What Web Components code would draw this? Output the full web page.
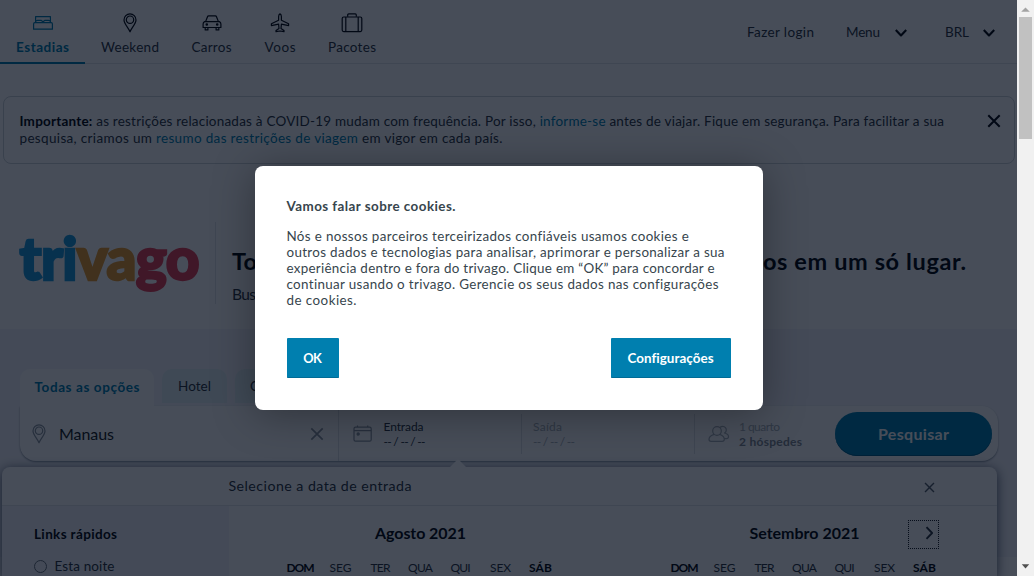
<!DOCTYPE html>
<html lang="pt-BR"><head><meta charset="utf-8"><title>trivago</title>
<style>html,body{margin:0;height:576px;overflow:hidden;background:#fff;font-family:Lato,"Open Sans",sans-serif;font-size:13.5px;color:#2c353e}</style></head>
<body><trv-app></trv-app>
<script>
// Text line whose letter spacing is adjusted to fill the width given in "w".
class FitText extends HTMLElement{
  constructor(){super();this.attachShadow({mode:'open'}).innerHTML='<style>:host{display:block;white-space:nowrap;width:max-content;line-height:var(--lh,17px)}span{display:inline-block}</style><span><slot></slot></span>';}
  connectedCallback(){
    const w=parseFloat(this.getAttribute('w')),s=this.shadowRoot.querySelector('span');
    if(!w)return;
    s.style.letterSpacing='0px';
    const n=this.textContent.length,d=(w-s.getBoundingClientRect().width)/(n-1);
    s.style.letterSpacing=d.toFixed(3)+'px';
    s.style.marginRight=(-d).toFixed(3)+'px';
  }
}
const icons={
 bed:[20,16,'<path d="M2.6 7.5V1.6h14.8v5.9M2.6 6.2l2-.9h3.4l2 1.4 2-1.4h3.4l2 .9M1.8 7.6h16.4q1.2 0 1.2 1.3v5.3H.6V8.9q0-1.3 1.2-1.3z"/>'],
 pin:[14,20,'<path d="M7 18.8C6 15.7 1 10.6 1 6.9a6 6 0 0 1 12 0c0 3.7-5 8.8-6 11.9z"/><circle cx="7" cy="6.7" r="3.7"/>'],
 car:[20,16,'<path d="M3.6 6.6 5.5 1.7Q5.8.9 6.6.9h6.8q.8 0 1.1.8l1.9 4.9M2.6 6.6h14.8q1.5.8 1.5 2.5v3.4H1.1V9.1q0-1.7 1.5-2.5zM3.2 12.7v2.2h2.7v-2.2m8.2 0v2.2h2.7v-2.2"/><circle cx="4.8" cy="9.5" r=".7"/><circle cx="15.2" cy="9.5" r=".7"/>'],
 plane:[20,20,'<path d="M10 .8q1.4.8 1.4 3v3.5l7.2 3.5v1.8l-7.2-1.5-.4 4.5 3 2v1.1L10 18l-4 .7v-1.1l3-2-.4-4.5-7.2 1.5v-1.8l7.2-3.5V3.8q0-2.2 1.4-3z"/>'],
 bag:[22,20,'<rect x="1.2" y="4" width="19.6" height="14.6" rx="1.5"/><path d="M4.8 4v14.6M17.2 4v14.6M6.7 3.8V1.9q0-1 1-1h6.6q1 0 1 1v1.9"/>'],
 down:[14,10,'<path d="m1.8 2 5.2 5.5L12.2 2" stroke-width="2.1"/>'],
 right:[9,14,'<path d="m1.5 1.2 5.6 5.8-5.6 5.8" stroke-width="1.9"/>'],
 close:[14,14,'<path d="m1.3 1.3 11.4 11.4m0-11.4L1.3 12.7" stroke-width="var(--sw,2)"/>'],
 cal:[20,18,'<rect x="1" y="2.2" width="17.2" height="14" rx="1.5"/><path d="M1 5.7h17.2M4.5 2V.6m10.2 1.4V.6"/><circle cx="5.2" cy="9" r="1.1" fill="currentColor"/>'],
 people:[22,18,'<circle cx="9" cy="6" r="4.3"/><path d="M6.3 9.4Q1 10.8 1 14.3q0 2 2 2h11.3q2 0 2-2 0-3.5-4.7-4.9M12 2.5a3.6 3.6 0 1 1 4.5 5.5q4 .9 4 3.8 0 1.8-2 1.8h-2"/>'],
 up:[9,5,'<path d="M.2 4.7 4.5.5l4.3 4.2z" fill="currentColor" stroke="none"/>'],
 dn:[9,5,'<path d="M.8.3h7.4L4.5 4.5z" fill="currentColor" stroke="none"/>']
};
class TrvIcon extends HTMLElement{
  constructor(){super();this.attachShadow({mode:'open'});}
  connectedCallback(){const [w,h,p]=icons[this.getAttribute('name')];
   this.shadowRoot.innerHTML=`<style>:host{display:block;flex:none;line-height:0}</style><svg width="${this.getAttribute('width')||w}" height="${this.getAttribute('height')||h}" viewBox="0 0 ${w} ${h}" fill="none" stroke="currentColor" stroke-width="1.2" stroke-linejoin="round">${p}</svg>`;}
}
function define(name,html){
  const t=document.createElement('template');
  t.innerHTML='<style>*{box-sizing:border-box}</style>'+html;
  customElements.define(name,class extends HTMLElement{constructor(){super();this.attachShadow({mode:'open'}).append(document.importNode(t.content,true));}});
}
customElements.define('fit-text',FitText);
customElements.define('trv-icon',TrvIcon);

define('nav-item',`<style>:host{display:flex;flex-direction:column;align-items:center;height:64px;padding-top:12px;box-sizing:border-box}
.i{height:22px;display:flex;align-items:center;margin-bottom:5px;color:#05080e}:host([active]),:host([active]) .i{color:#007faf}:host([active]){font-weight:700;border-bottom:2px solid #007faf}</style><div class="i"><slot name="icon"></slot></div><slot></slot>`);
define('trv-header',`<style>:host{display:flex;height:64px;border-bottom:1px solid #e3e6e9;box-sizing:border-box}
nav-item{flex:none}.r{margin-left:auto;display:flex;padding:24px 21px 0 0;align-items:flex-start}.r trv-icon{margin:4px 0 0 14px;color:#05080e}.m{display:flex}</style>
<nav-item active style="width:85px"><trv-icon slot="icon" name="bed"></trv-icon><fit-text w="53">Estadias</fit-text></nav-item>
<nav-item style="width:90px"><trv-icon slot="icon" name="pin"></trv-icon><fit-text w="58">Weekend</fit-text></nav-item>
<nav-item style="width:73px"><trv-icon slot="icon" name="car"></trv-icon><fit-text w="40">Carros</fit-text></nav-item>
<nav-item style="width:64px"><trv-icon slot="icon" name="plane"></trv-icon><fit-text w="31">Voos</fit-text></nav-item>
<nav-item style="width:80px"><trv-icon slot="icon" name="bag"></trv-icon><fit-text w="48">Pacotes</fit-text></nav-item>
<div class="r"><fit-text w="67">Fazer login</fit-text><div class="m" style="margin-left:32px"><fit-text w="34">Menu</fit-text><trv-icon name="down"></trv-icon></div><div class="m" style="margin-left:37px"><fit-text w="24">BRL</fit-text><trv-icon name="down" style="margin-left:13px"></trv-icon></div></div>`);
define('trv-notice',`<style>:host{display:flex;margin:32px 2px 0 3px;height:68px;border:1px solid #ccd2d7;border-radius:8px;padding:16px 13px 0 15.5px;box-sizing:border-box;justify-content:space-between}a{color:#007faf}b,trv-icon{color:#05080e}trv-icon{margin-top:1px}</style>
<div><fit-text w="924.5"><b>Importante:</b> as restrições relacionadas à COVID-19 mudam com frequência. Por isso, <a>informe-se</a> antes de viajar. Fique em segurança. Para facilitar a sua</fit-text><fit-text w="483">pesquisa, criamos um <a>resumo das restrições de viagem</a> em vigor em cada país.</fit-text></div><trv-icon name="close"></trv-icon>`);
define('trv-hero',`<style>:host{display:flex;height:165px;padding:58px 50px 0 19px;box-sizing:border-box}
.logo{font-size:58.5px;font-weight:900;--lh:60px;width:196px;margin-top:5px;-webkit-text-stroke:2.4px currentColor}.logo fit-text{margin-left:.5px}.b{color:#1c9bdc;-webkit-text-stroke-color:#1c9bdc}.o{color:#e89c2c;-webkit-text-stroke-color:#e89c2c}.g{color:#e63f55;-webkit-text-stroke-color:#e63f55}
.t{flex:1;border-left:1px solid #e3e6e9;height:82px;padding:24px 1px 0 16px}.h{display:flex;justify-content:space-between;font-size:23.5px;font-weight:700;--lh:30px;color:#05080e}.s{font-size:15.5px;--lh:20px;margin-top:8px}</style>
<div class="logo"><fit-text w="180"><span class="b">tri</span><span class="o">va</span><span class="g">go</span></fit-text></div>
<div class="t"><div class="h"><fit-text w="25">To</fit-text><fit-text w="203">os em um só lugar.</fit-text></div><div class="s"><fit-text w="24">Bus</fit-text></div></div>`);
define('trv-search',`<style>:host{display:block;margin:0 19px 0 20px}
.tabs{display:flex;height:37px;gap:8px}.tab{height:34px;border-radius:10px 10px 0 0;background:#e2eff3;padding:9px 16px 0}.tab.on{height:37px;width:134px;padding:10px 0 0 14.5px;background:#fff;color:#007faf;font-weight:700}
.bar{display:flex;height:55px;background:#fff;border-radius:0 16px 16px 16px;box-shadow:0 1px 2px #8c95a0;align-items:center}
.c{display:flex;align-items:center;border-right:1px solid #dfe3e7;flex:none}
.dest{width:319px;height:55px;padding:0 14px 0 12px;color:#8c959e}.dest fit-text{font-size:16px;margin:0 auto 0 13px;color:#171b21;--lh:20px}
.two{--lh:15px;font-size:12px}.btn{width:157px;height:44px;border-radius:22px;background:#007faf;color:#fff;display:flex;justify-content:center;align-items:center;font-weight:700;font-size:16px;--lh:20px;box-shadow:inset 0 -1px 0 #005f8a}</style>
<div class="tabs"><div class="tab on"><fit-text w="105">Todas as opções</fit-text></div><div class="tab"><fit-text w="33">Hotel</fit-text></div><div class="tab" style="width:64px;padding-left:15px"><fit-text>C</fit-text></div></div>
<div class="bar"><div class="c dest"><trv-icon name="pin"></trv-icon><fit-text w="55">Manaus</fit-text><trv-icon name="close" style="--sw:1.7"></trv-icon></div>
<div class="c" style="width:183px;height:40px;padding-left:14px;gap:10.5px"><trv-icon name="cal" style="color:#8c959e"></trv-icon><div class="two"><fit-text w="40">Entrada</fit-text><fit-text w="42">-- / -- / --</fit-text></div></div>
<div class="c" style="width:173px;height:40px;padding-left:11px;color:#a8afb6"><div class="two"><fit-text w="29">Saída</fit-text><fit-text w="42">-- / -- / --</fit-text></div></div>
<div class="c" style="border:0;width:140px;padding-left:13px;gap:9px;color:#a8afb6"><trv-icon name="people"></trv-icon><div class="two"><fit-text w="41">1 quarto</fit-text><fit-text w="63" style="font-weight:700;color:#828a92">2 hóspedes</fit-text></div></div>
<div class="btn"><fit-text w="71">Pesquisar</fit-text></div></div>`);
define('cal-month',`<style>:host{display:block;width:280px;flex:none}.m{display:flex;justify-content:center;font-size:16px;font-weight:700;--lh:20px;color:#05080e}.d{display:grid;grid-template-columns:repeat(7,40px);justify-items:center;font-size:12px;margin-top:16px}b{color:#05080e}</style><div class="m"><slot></slot></div>
<div class="d"><fit-text w="28"><b>DOM</b></fit-text><fit-text w="22">SEG</fit-text><fit-text w="20">TER</fit-text><fit-text w="25">QUA</fit-text><fit-text w="20">QUI</fit-text><fit-text w="21">SEX</fit-text><fit-text w="23"><b>SÁB</b></fit-text></div>`);
define('date-panel',`<style>:host{display:block;position:relative;margin:6px 20px 0 2px;height:110px;background:#fff;border-radius:8px 8px 0 0;box-shadow:0 2px 12px rgba(25,35,60,.75)}
.arrow{position:absolute;left:448px;top:-8px;width:0;border:8px solid transparent;border-top:0;border-bottom-color:#fff}
.head{height:39px;border-bottom:1px solid #e3e6e9;display:flex;justify-content:space-between;padding:9px 62px 0 226.5px;font-size:14.2px;--lh:20px}.head trv-icon{margin-top:6px;color:#555e68}
.body{display:flex;height:71px}.side{width:227px;background:#f4f5fa;padding:20px 0 0 32px}.o{display:flex;gap:7.5px;margin-top:15px}.o i{width:13px;height:13px;border:1px solid #68717b;border-radius:50%;margin-top:2px}
.cals{display:flex;gap:104px;padding:17px 0 0 51.5px;position:relative}.next{position:absolute;left:679px;top:14px;width:31px;height:29px;border:1px dotted #171b21;display:flex;align-items:center;padding:0 0 3px 16px}</style>
<div class="arrow"></div><div class="head"><fit-text w="183">Selecione a data de entrada</fit-text><trv-icon name="close" width="11" height="11" style="--sw:1.8"></trv-icon></div>
<div class="body"><div class="side"><fit-text w="83" style="font-weight:700;color:#05080e">Links rápidos</fit-text><div class="o"><i></i><fit-text w="60">Esta noite</fit-text></div></div>
<div class="cals"><cal-month><fit-text w="91">Agosto 2021</fit-text></cal-month><cal-month><fit-text w="110">Setembro 2021</fit-text></cal-month><div class="next"><trv-icon name="right"></trv-icon></div></div></div>`);
define('cookie-dialog',`<style>:host{position:absolute;inset:0;background:rgba(0,8,24,.72);display:flex;justify-content:center;align-items:flex-start;padding-top:165.5px;box-sizing:border-box}
.d{width:508px;height:244.5px;border-radius:8px;background:#fff;color:#37454d;padding:32px;box-shadow:0 4px 42px rgba(0,0,0,.34);--lh:16px;font-size:13.4px}
.t{font-weight:700;margin-bottom:14px}.f{display:flex;justify-content:space-between;margin-top:30px;color:#fff;font-weight:700}.b{height:40.5px;background:#007faf;border-radius:1px;display:flex;align-items:center;justify-content:center;border-bottom:1px solid #006b96;padding-top:2px}</style>
<div class="d"><fit-text class="t" w="169">Vamos falar sobre cookies.</fit-text>
<fit-text w="402">Nós e nossos parceiros terceirizados confiáveis usamos cookies e</fit-text><fit-text w="438">outros dados e tecnologias para analisar, aprimorar e personalizar a sua</fit-text><fit-text w="428">experiência dentro e fora do trivago. Clique em “OK” para concordar e</fit-text><fit-text w="432">continuar usando o trivago. Gerencie os seus dados nas configurações</fit-text><fit-text w="70">de cookies.</fit-text>
<div class="f"><div class="b" style="width:52px"><fit-text w="18.5" style="font-size:12.8px">OK</fit-text></div><div class="b" style="width:120px"><fit-text w="86">Configurações</fit-text></div></div></div>`);
define('scroll-bar',`<style>:host{display:flex;flex-direction:column;align-items:center;width:17px;height:576px;background:#f1f1f1}.u{height:17px;padding-top:7px;box-sizing:border-box;color:#a3a3a3}.th{width:13px;height:122px;background:#c1c1c1}.n{margin-top:auto;height:12px;color:#505050}</style><trv-icon class="u" name="up"></trv-icon><div class="th"></div><trv-icon class="n" name="dn"></trv-icon>`);
define('trv-app',`<style>:host{display:flex;height:576px;overflow:hidden}.page{position:relative;width:1017px;height:576px;overflow:hidden;flex:none}.sec{background:linear-gradient(#f4f5fa 0 228px,#fff 228px);padding-top:40px;height:247px}</style>
<div class="page"><trv-header></trv-header><trv-notice></trv-notice><trv-hero></trv-hero><div class="sec"><trv-search></trv-search><date-panel></date-panel></div><cookie-dialog></cookie-dialog></div><scroll-bar></scroll-bar>`);
</script></body></html>
